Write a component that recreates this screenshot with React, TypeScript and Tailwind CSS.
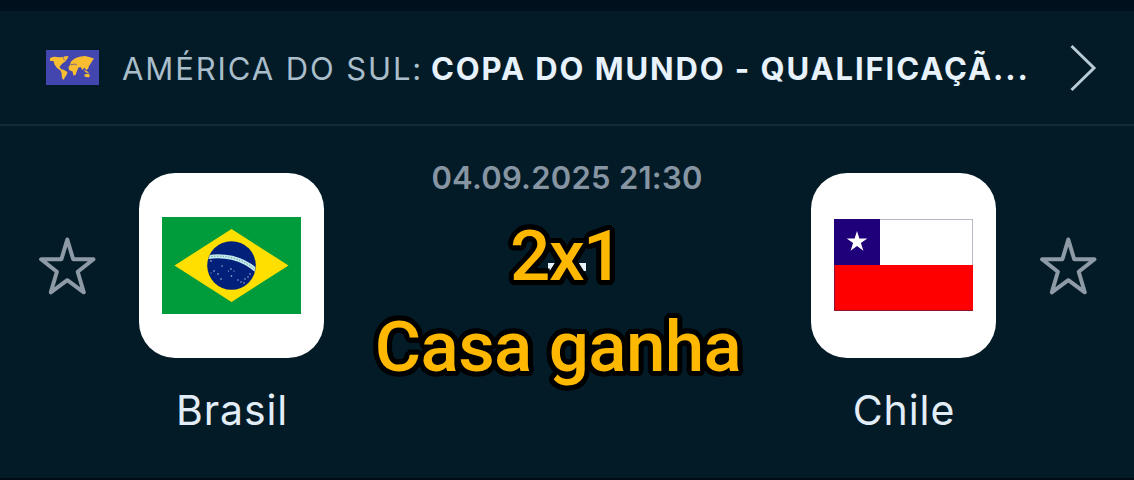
import React from 'react';

interface TeamProps {
    name: string;
    children: React.ReactNode;
}

const WorldFlag: React.FC = () => (
    <svg viewBox="0 0 53 35" className="h-[35px] w-[53px] shrink-0">
        <rect width="53" height="35" fill="#4346ae" />
        <g fill="#f9bd32">
            <path d="M4 8 L8 6.8 L14 7.2 L17 7 L18 10 L20 11 L17 13 L15 15 L13.5 17 L15 19 L18 20 L21.5 22 L20.5 25 L18.5 28 L17.5 30 L16 28 L15.5 23 L14.5 20.5 L11 18 L8.5 14.5 L7.5 11 L4 11 Z" />
            <path d="M17.5 6.5 L22.5 6 L21.5 8.5 L19.5 11 L18 9 Z" />
            <path d="M24 15 L25 11.5 L28 9 L31 7.5 L35 6.5 L39 6 L43 7 L48 8.5 L46.5 10.5 L45 13 L43 16 L42 19 L40 20 L38.5 17.5 L36.5 20 L34.5 17 L32.5 17.5 L31 21 L29.5 25 L27.5 25.5 L26.5 21.5 L23 20 L22.5 17 Z" />
            <path d="M37.5 20 L41 21 L43 23 L40 22.5 Z M38.5 24.5 L42.5 23.5 L44 26 L42.5 27.5 L38.5 26.5 Z" />
        </g>
        <path d="M24.5 14.8 L29 14 L31 15.2" fill="none" stroke="#4346ae" strokeWidth=".7" />
    </svg>
);

const BrazilFlag: React.FC = () => (
    <svg viewBox="0 0 139 97" className="mt-px ml-px h-[97px] w-[139px]">
        <defs>
            <clipPath id="globe">
                <circle cx="69.5" cy="48.5" r="24" />
            </clipPath>
        </defs>
        <rect width="139" height="97" fill="#009b3a" />
        <path d="M12.5 48.5 L69.5 12 L126.5 48.5 L69.5 85 Z" fill="#fedf00" />
        <circle cx="69.5" cy="48.5" r="24.3" fill="#00207a" />
        <g clipPath="url(#globe)">
            <path d="M44 40.5 C60 37 80 40 96 55" fill="none" stroke="#c3e8ee" strokeWidth="4" />
            <path d="M44 40.5 C60 37 80 40 96 55" fill="none" stroke="#4f9b91" strokeWidth=".9" strokeDasharray="1.2 1.6" />
            <g fill="#b8cce4">
                <circle cx="49" cy="44" r=".8" />
                <circle cx="60" cy="49" r=".7" />
                <circle cx="52" cy="54" r=".8" />
                <circle cx="56" cy="57" r=".8" />
                <circle cx="49" cy="56" r=".6" />
                <circle cx="59" cy="62" r=".8" />
                <circle cx="69" cy="52" r=".8" />
                <circle cx="66.5" cy="54" r=".6" />
                <circle cx="72" cy="54" r=".6" />
                <circle cx="69.5" cy="59" r=".8" />
                <circle cx="76" cy="63" r=".7" />
                <circle cx="79" cy="65" r=".7" />
                <circle cx="82" cy="66" r=".7" />
                <circle cx="83" cy="62" r=".7" />
                <circle cx="86" cy="60" r=".7" />
                <circle cx="88" cy="57" r=".7" />
                <circle cx="78" cy="42" r=".7" />
            </g>
        </g>
    </svg>
);

const ChileFlag: React.FC = () => (
    <svg viewBox="0 0 139 92" className="h-[92px] w-[139px]">
        <rect x=".5" y=".5" width="138" height="91" fill="#fff" stroke="#b9b9c4" />
        <rect y="46" width="139" height="46" fill="#fe0000" />
        <rect width="46" height="46" fill="#20007a" />
        <path d="M.5 46 V91.5 H139" fill="none" stroke="#8b1734" />
        <path d="M23 12 L25.4 19.5 H33.3 L26.9 24.1 L29.4 31.7 L23 27 L16.6 31.7 L19.1 24.1 L12.7 19.5 H20.6 Z" fill="#fff" />
    </svg>
);

const FavoriteButton: React.FC = () => (
    <button aria-label="Favorito" className="mt-[110px] h-[60px] w-[60px] shrink-0">
        <svg viewBox="0 0 60 60" className="h-[60px] w-[60px]" fill="none" stroke="#8e9ba6" strokeWidth="4" strokeLinejoin="round">
            <path d="M30.3 3.5 L36.2 23.3 H56.5 L40.7 35.8 L46.8 56.3 L30.3 44.2 L13.8 56.3 L19.9 35.8 L4.1 23.3 H24.4 Z" />
        </svg>
    </button>
);

const Team: React.FC<TeamProps> = ({ name, children }) => (
    <div className="mt-[46.5px] flex w-[185px] shrink-0 flex-col items-center">
        <div className="flex h-[185px] w-[185px] items-center justify-center rounded-[36px] bg-white">{children}</div>
        <span className="mt-7 pl-0.5 text-[41px] leading-[48px] tracking-[.9px] text-[#e2edf7]">{name}</span>
    </div>
);

const App: React.FC = () => {
    return (
        <div className="flex h-[480px] w-[1134px] flex-col overflow-hidden border-b-2 border-[#000b18] bg-[#021b26] font-['Inter',sans-serif]">
            <div className="h-[11px] shrink-0 bg-[#00101d]" />
            <header className="flex h-[115px] shrink-0 items-center border-b-2 border-[#102a36] pr-[37px] pl-[46px]">
                <WorldFlag />
                <div className="ml-[23px] flex w-[949px] items-center whitespace-pre pt-0.5 text-[31px] leading-10">
                    <span className="w-[309px] tracking-[1.9px] text-[#a9bdca]">AMÉRICA DO SUL:</span>
                    <span className="font-bold tracking-[1.9px] text-[#e8f2fc]">COPA DO MUNDO - QUALIFICAÇÃ...</span>
                </div>
                <svg viewBox="0 0 28 48" className="h-12 w-7 shrink-0" fill="none" stroke="#b9cbd4" strokeWidth="3">
                    <path d="M2.5 2 L25 24 L2.5 46" />
                </svg>
            </header>
            <main className="flex flex-1 items-start justify-between pr-[36.5px] pl-[37px]">
                <div className="flex gap-[41.5px]">
                    <FavoriteButton />
                    <Team name="Brasil">
                        <BrazilFlag />
                    </Team>
                </div>
                <div className="flex w-[380px] flex-col items-center">
                    <time className="mt-8 whitespace-nowrap text-[31px] font-semibold leading-10 tracking-[.25px] text-[#8795a3]">04.09.2025 21:30</time>
                    <div className="relative mt-3 mr-[18px] flex flex-col items-center whitespace-nowrap font-['Roboto',sans-serif] text-[71px] font-medium leading-[91px] text-[#ffb800] [text-shadow:5px_0_#000,4.6px_1.9px_#000,3.5px_3.5px_#000,1.9px_4.6px_#000,0_5px_#000,-1.9px_4.6px_#000,-3.5px_3.5px_#000,-4.6px_1.9px_#000,-5px_0_#000,-4.6px_-1.9px_#000,-3.5px_-3.5px_#000,-1.9px_-4.6px_#000,0_-5px_#000,1.9px_-4.6px_#000,3.5px_-3.5px_#000,4.6px_-1.9px_#000]">
                        <div className="absolute top-[53px] ml-[17px] h-2 w-[38px] bg-[#e8f2fc]" />
                        <span className="relative ml-4 tracking-[-1.5px]">2x1</span>
                        <span className="relative tracking-[-.65px]">Casa ganha</span>
                    </div>
                </div>
                <div className="flex gap-[42px]">
                    <Team name="Chile">
                        <ChileFlag />
                    </Team>
                    <FavoriteButton />
                </div>
            </main>
        </div>
    );
};

export default App;
